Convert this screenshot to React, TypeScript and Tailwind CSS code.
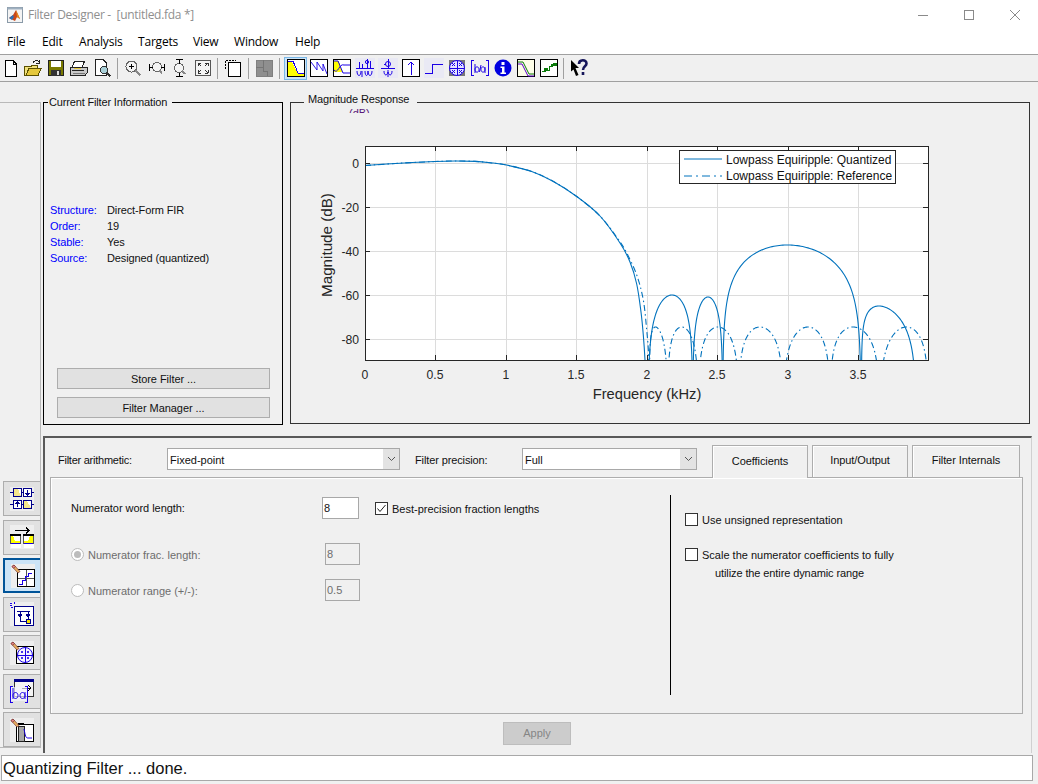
import React from "react";

const B = "#1a00e6";

type Pt = [number, number];
function lobe(a: number, b: number, px: number, py: number, k = 2.2): Pt[] {
  const g = Math.log(0.5) / Math.log((px - a) / (b - a));
  const out: Pt[] = [];
  const N = 120;
  for (let i = 1; i < N; i++) {
    const u = 0.5 - 0.5 * Math.cos((Math.PI * i) / N);
    const t = Math.pow(u, g);
    const y = py - 20 * Math.log10(Math.max(Math.sin(Math.PI * t), 1e-4)) * k;
    out.push([a + (b - a) * u, y]);
  }
  return out;
}
function smooth(p: Pt[]): string {
  let d = `M${p[0][0]} ${p[0][1]}`;
  for (let i = 0; i < p.length - 1; i++) {
    const p0 = p[i - 1] || p[i];
    const p1 = p[i];
    const p2 = p[i + 1];
    const p3 = p[i + 2] || p2;
    d += ` C${p1[0] + (p2[0] - p0[0]) / 6} ${p1[1] + (p2[1] - p0[1]) / 6} ${p2[0] - (p3[0] - p1[0]) / 6} ${p2[1] - (p3[1] - p1[1]) / 6} ${p2[0]} ${p2[1]}`;
  }
  return d;
}
function poly(p: Pt[]): string {
  return "M" + p.map((q) => `${q[0].toFixed(2)} ${q[1].toFixed(2)}`).join(" L");
}
const mainShared: Pt[] = [
  [365, 165.5], [400, 163.2], [435, 161.5], [455, 161], [475, 161.4], [490, 162.7], [506.5, 165],
  [531.7, 171.5], [553, 181.3], [576.7, 196.5], [600, 216],
];
const quantMain = smooth([...mainShared, [620, 243], [630, 262], [636.7, 284], [641, 312], [643.3, 335], [645, 360], [646.5, 400]]);
const refMain = smooth([...mainShared, [618, 239], [626.7, 253], [636.7, 275], [643.3, 300], [646.7, 330], [648.7, 357], [649.5, 400]]);
const quantLobes = [
  lobe(648, 692.7, 672, 295, 2.6),
  lobe(692.7, 722.7, 708, 297, 2.6),
  lobe(722.7, 861, 787.5, 245, 3.2),
  lobe(861.5, 916, 879, 306, 2.6),
].map(poly);
const refLobes = [
  lobe(649.5, 667.7, 655.5, 327),
  lobe(667.7, 698.3, 681.7, 327),
  lobe(698.3, 738.7, 718, 327),
  lobe(738.7, 783.2, 760, 327),
  lobe(783.2, 830.2, 808, 327),
  lobe(830.2, 879.5, 853, 327),
  lobe(879.5, 928.5, 906.5, 327),
].map(poly);

const xt: [number, string][] = [[365.5, "0"], [435.5, "0.5"], [506.5, "1"], [576.5, "1.5"], [647.5, "2"], [717.5, "2.5"], [788.5, "3"], [858.5, "3.5"]];
const yt: [number, string][] = [[163.5, "0"], [207.5, "-20"], [251.5, "-40"], [295.5, "-60"], [339.5, "-80"]];
const AX = "#262626";
const dash = "6 3 1.5 3";

function Plot() {
  return (
    <svg viewBox="291 103 738 320" width={738} height={320} className="block">
      <defs>
        <clipPath id="axclip"><rect x={365} y={146} width={564} height={215} /></clipPath>
      </defs>
      <rect x={365.5} y={146.5} width={563} height={214} fill="#fff" />
      {xt.slice(1).map(([x]) => <line key={x} x1={x} x2={x} y1={146} y2={360} stroke="#dcdcdc" />)}
      {yt.map(([y]) => <line key={y} x1={365} x2={928} y1={y} y2={y} stroke="#dcdcdc" />)}
      <g clipPath="url(#axclip)" fill="none" stroke="#0072BD" strokeWidth={1.1}>
        <path d={refMain} strokeDasharray={dash} />
        {refLobes.map((d, i) => <path key={i} d={d} strokeDasharray={dash} />)}
        <path d={quantMain} />
        {quantLobes.map((d, i) => <path key={i} d={d} />)}
      </g>
      <rect x={365.5} y={146.5} width={563} height={214} fill="none" stroke={AX} />
      {xt.slice(1).map(([x]) => (
        <g key={x} stroke={AX}>
          <line x1={x} x2={x} y1={146} y2={151} />
          <line x1={x} x2={x} y1={355} y2={360} />
        </g>
      ))}
      {yt.map(([y]) => (
        <g key={y} stroke={AX}>
          <line x1={365} x2={370} y1={y} y2={y} />
          <line x1={923} x2={928} y1={y} y2={y} />
        </g>
      ))}
      <g fill={AX} fontSize={12.2} fontFamily="'Liberation Sans',Arial,sans-serif">
        {xt.map(([x, s]) => <text key={s} x={x - 0.5} y={379} textAnchor="middle">{s}</text>)}
        {yt.map(([y, s]) => <text key={s} x={359} y={y + 4.5} textAnchor="end">{s}</text>)}
        <text x={647} y={399} textAnchor="middle" fontSize={14.7}>Frequency (kHz)</text>
        <text transform="translate(332 245) rotate(-90)" textAnchor="middle" fontSize={15.2}>Magnitude (dB)</text>
      </g>
      <rect x={679.5} y={150.5} width={216} height={33} fill="#fff" stroke={AX} />
      <line x1={684} x2={722} y1={159} y2={159} stroke="#0072BD" />
      <line x1={684} x2={722} y1={176} y2={176} stroke="#0072BD" strokeDasharray="8 4 2 4" />
      <g fill="#111" fontSize={12} fontFamily="'Liberation Sans',Arial,sans-serif">
        <text x={726} y={164}>Lowpass Equiripple: Quantized</text>
        <text x={726} y={180}>Lowpass Equiripple: Reference</text>
      </g>
    </svg>
  );
}

function Ico({ children, bg }: { children: React.ReactNode; bg?: boolean }) {
  return (
    <svg viewBox="0 0 20 20" width={20} height={20} className={bg ? "block bg-[#e9e9f4]" : "block"} shapeRendering="crispEdges">
      {children}
    </svg>
  );
}

const Box = () => <rect x={1.5} y={1.5} width={17} height={17} fill="#fff" stroke="#000" />;

const tools: Record<string, React.ReactNode> = {
  new: <Ico><path d="M4.5 2.5H12L15.5 6V18.5H4.5Z M12 2.5V6H15.5" fill="#fff" stroke="#000" /></Ico>,
  open: (
    <Ico>
      <path d="M1.5 8.5H8.5V7H14.5V10H6L3 17.5H1.5Z" fill="#f0e07a" stroke="#5a5000" />
      <path d="M3 17.5L6 10H18.5L15 17.5Z" fill="#e5c83c" stroke="#5a5000" />
      <path d="M10 5C11 2.5 14 2 16 3.5M16 1.5V5H13" fill="none" stroke="#222" />
    </Ico>
  ),
  save: (
    <Ico>
      <rect x={2.5} y={2.5} width={15} height={15} fill="#7a7a00" stroke="#222" />
      <rect x={5} y={3} width={10} height={6} fill="#fff" />
      <rect x={5} y={12} width={10} height={6} fill="#333" />
      <rect x={11} y={13} width={2} height={4} fill="#ddd" />
    </Ico>
  ),
  print: (
    <Ico>
      <path d="M5.5 3.5H15.5L13 9H3Z" fill="#fff" stroke="#222" />
      <path d="M1.5 9.5H18.5V14.5L16 17.5H1.5Z" fill="#c8c8c8" stroke="#222" />
      <path d="M3 12H15" stroke="#222" />
      <path d="M4 15H16" stroke="#777" />
      <rect x={5} y={10} width={7} height={1} fill="#e5c83c" />
    </Ico>
  ),
  preview: (
    <Ico>
      <path d="M3.5 1.5H11L14.5 5V17.5H3.5Z" fill="#fff" stroke="#222" />
      <circle cx={12} cy={12} r={3.5} fill="#a9d0d8" stroke="#333" />
      <path d="M15 15L18.5 18.5" stroke="#333" strokeWidth={2} />
    </Ico>
  ),
  zin: (
    <Ico>
      <circle cx={8.5} cy={8.5} r={5.5} fill="#f4f4f4" stroke="#666" />
      <path d="M6 8.5H11M8.5 6V11" stroke="#000" />
      <path d="M12.5 12.5L17.5 17.5" stroke="#888" strokeWidth={2} />
    </Ico>
  ),
  zx: (
    <Ico>
      <circle cx={10} cy={9} r={4.5} fill="#f4f4f4" stroke="#666" />
      <path d="M2.5 5.5V12.5M17.5 5.5V12.5M3 9H6M14 9H17" stroke="#000" />
      <path d="M12.5 12.5L15 15.5" stroke="#888" strokeWidth={2} />
    </Ico>
  ),
  zy: (
    <Ico>
      <circle cx={9} cy={10} r={4.5} fill="#f4f4f4" stroke="#666" />
      <path d="M5.5 1.5H12.5M5.5 18.5H12.5M9 2V5.5M9 15V18" stroke="#000" />
      <path d="M12 13L15.5 16" stroke="#888" strokeWidth={2} />
    </Ico>
  ),
  fit: (
    <Ico>
      <rect x={2.5} y={2.5} width={15} height={15} fill="#f4f4f4" stroke="#555" />
      <path d="M5 5H8M5 5V8M5 5L8 8M15 5H12M15 5V8M15 5L12 8M5 15H8M5 15V12M5 15L8 12M15 15H12M15 15V12M15 15L12 12" stroke="#333" fill="none" />
    </Ico>
  ),
  overlay: (
    <Ico>
      <path d="M2.5 11V2.5H13" fill="none" stroke="#000" strokeDasharray="2 1" />
      <rect x={5.5} y={4.5} width={12} height={13.5} fill="#fff" stroke="#000" />
    </Ico>
  ),
  grey: (
    <Ico>
      <rect x={2} y={2} width={16} height={16} fill="#8f8f8f" stroke="#808080" />
      <path d="M2 9H9V13H13V18M9 2V9" fill="none" stroke="#757575" />
    </Ico>
  ),
  mag: (
    <Ico><Box /><path d="M2 4H6L12 16H18V18H2Z" fill="#ffff00" /><path d="M2 3H7L12 15H18" fill="none" stroke={B} /></Ico>
  ),
  phase: (
    <Ico><Box /><path d="M2 4L8 12V4L14 13V6L18 16" fill="none" stroke={B} shapeRendering="auto" strokeWidth={0.9} /></Ico>
  ),
  magphase: (
    <Ico><Box /><path d="M2 3H7L10 14H2Z" fill="#ffff00" /><path d="M2 3H6L11 15H18M2 12C6 17 7 5 12 7H18" fill="none" stroke={B} shapeRendering="auto" /></Ico>
  ),
  gd: (
    <Ico bg>
      <path d="M1 10H19" stroke={B} />
      <path d="M4 4V10M7 6V10M12 1V10M15 3V10" stroke={B} />
      <circle cx={12} cy={4} r={1.6} fill="none" stroke={B} shapeRendering="auto" />
      <path d="M2 13C2 19 6 19 6 13M7 13V19M10 13C10 19 13 19 13 13C13 19 17 19 17 13" fill="none" stroke={B} shapeRendering="auto" />
    </Ico>
  ),
  pd: (
    <Ico bg>
      <path d="M3 10H17" stroke={B} />
      <circle cx={10} cy={6} r={2.5} fill="none" stroke={B} shapeRendering="auto" />
      <path d="M10 1V10M6 6H8" stroke={B} />
      <path d="M6 13C6 18 9 18 10 14C11 18 14 18 14 13M10 12V19" fill="none" stroke={B} shapeRendering="auto" />
    </Ico>
  ),
  imp: (
    <Ico><Box /><path d="M10 17V4M6.5 7.5L10 4L13.5 7.5" fill="none" stroke={B} /></Ico>
  ),
  step: (
    <Ico bg><path d="M1 15.5H8.5V6.5H19" fill="none" stroke={B} /></Ico>
  ),
  pz: (
    <Ico>
      <rect x={2} y={2} width={16} height={16} fill="#777" />
      <circle cx={10} cy={10} r={7.5} fill="#e4e4ff" stroke={B} shapeRendering="auto" />
      <path d="M3 10H17M10 3V17" stroke={B} />
      <path d="M5 5L8 8M8 5L5 8M12 5L15 8M15 5L12 8M5 12L8 15M8 12L5 15M12 12L15 15M15 12L12 15" stroke={B} shapeRendering="auto" />
    </Ico>
  ),
  ba: (
    <Ico>
      <path d="M4 2.5H1.5V17.5H4M16 2.5H18.5V17.5H16" fill="none" stroke={B} />
      <path d="M5 6V15M5 11.5C5 8 9 8 9 11.5C9 15 5 15 5 11.5M15 9V15M15 11.5C15 8 11 8 11 11.5C11 15 15 15 15 11.5" fill="none" stroke={B} shapeRendering="auto" />
      <path d="M9.5 14L11 7" stroke={B} shapeRendering="auto" />
    </Ico>
  ),
  info: (
    <svg viewBox="0 0 20 20" width={20} height={20} className="block">
      <circle cx={10} cy={10} r={8.5} fill="#0000e0" />
      <rect x={8.5} y={4} width={3} height={3} fill="#fff" />
      <path d="M7.5 8.5H11.5V14.5H13V16H7.5V14.5H9V10H7.5Z" fill="#fff" />
    </svg>
  ),
  noise: (
    <Ico>
      <rect x={1.5} y={1.5} width={17} height={17} fill="#fdfde8" stroke="#000" />
      <path d="M2 4H7L13 16H18" fill="none" stroke="#0a7a0a" shapeRendering="auto" />
      <path d="M2 6H6L12 18H18" fill="none" stroke="#5a00c8" shapeRendering="auto" />
    </Ico>
  ),
  round: (
    <Ico><Box /><path d="M3 13.5H6V11H8V12.5H10.5V8.5H13V7H15V6H17V8" fill="none" stroke="#0a7a0a" strokeWidth={1.4} /></Ico>
  ),
  help: (
    <svg viewBox="0 0 20 20" width={20} height={20} className="block">
      <path d="M2 2L10 10H6.5L9.5 17L7 18L4.5 11.5L2 13.5Z" fill="#000" />
      <path d="M10 6C10 1 17.5 1 17.5 5.5C17.5 8.5 14 8 14 12" fill="none" stroke="#16165a" strokeWidth={2.6} />
      <rect x={12.7} y={14} width={2.6} height={3} fill="#16165a" />
    </svg>
  ),
};

function T({ k, w = 23, ml = 0, sel }: { k: string; w?: number; ml?: number; sel?: boolean }) {
  return (
    <div
      className={"flex h-[23px] items-center justify-center " + (sel ? "border border-[#7ab8e8] bg-[#cce4f7] " : "")}
      style={{ width: w, marginLeft: ml }}
    >
      {tools[k]}
    </div>
  );
}
function Sep({ w }: { w: number }) {
  return (
    <div className="flex h-[23px] items-center justify-center" style={{ width: w }}>
      <div className="h-[21px] w-px bg-[#a0a0a0]" />
    </div>
  );
}

const Pencil = () => (
  <g shapeRendering="auto">
    <path d="M1 2.5L3 1L9 7.5L7 9Z" fill="#e8b060" stroke="#733" strokeWidth={0.7} />
    <path d="M1 2.5L3 1L4.5 2.6L2.5 4.2Z" fill="#e88a8a" stroke="#733" strokeWidth={0.7} />
  </g>
);
const sideIcons: React.ReactNode[] = [
  <svg viewBox="0 0 24 24" width={24} height={24} className="block bg-[#eeeeee]" shapeRendering="crispEdges" key="1">
    <rect x={3.5} y={1.5} width={8} height={8} fill="#fff" stroke="#00008b" />
    <path d="M4 2H8L11 9H4Z" fill="#f5e68c" />
    <rect x={13.5} y={1.5} width={8} height={8} fill="#fff" stroke="#00008b" />
    <path d="M17.5 3V8M15.5 6L17.5 8L19.5 6" stroke="#00008b" fill="none" />
    <rect x={3.5} y={13.5} width={8} height={8} fill="#fff" stroke="#00008b" />
    <path d="M7.5 20V15M5.5 17L7.5 15L9.5 17" stroke="#00008b" fill="none" />
    <rect x={13.5} y={13.5} width={8} height={8} fill="#fff" stroke="#00008b" />
    <path d="M14 14H17L21 21H14Z" fill="#f5e68c" />
    <path d="M0 5.5H3M0 17.5H3M21 5.5H24M21 17.5H24M11 5.5H14M11 17.5H14" stroke="#00008b" />
  </svg>,
  <svg viewBox="0 0 24 24" width={24} height={24} className="block bg-[#eeeeee]" shapeRendering="crispEdges" key="2">
    <path d="M5 5.5H19M16 2.5L19 5.5L16 8.5" stroke="#000" fill="none" />
    <rect x={0.5} y={9.5} width={10} height={13} fill="#fff" />
    <rect x={0} y={9} width={11} height={2} fill="#000" />
    <path d="M0.5 11V18.5M10.5 11V18.5" stroke="#555" />
    <path d="M1 11H3L5 16H10V18H1Z" fill="#ffff00" />
    <path d="M1 18.5H10" stroke={B} />
    <rect x={13.5} y={9.5} width={10} height={13} fill="#fff" />
    <rect x={13} y={9} width={11} height={2} fill="#000" />
    <path d="M13.5 11V18.5M23.5 11V18.5" stroke="#555" />
    <path d="M14 16H18L20 11H23V18H14Z" fill="#ffff00" />
    <path d="M14 18.5H23" stroke={B} />
  </svg>,
  <svg viewBox="0 0 24 24" width={24} height={24} className="block bg-[#eeeeee]" shapeRendering="crispEdges" key="3">
    <rect x={6.5} y={5.5} width={17} height={17} fill="#fff" stroke="#000" />
    <path d="M7 14H23M15 6V22" stroke="#555" />
    <path d="M8 20H11V16H14V12H17V9H21" fill="none" stroke={B} />
    <Pencil />
  </svg>,
  <svg viewBox="0 0 24 24" width={24} height={24} className="block bg-[#eeeeee]" shapeRendering="crispEdges" key="4">
    <rect x={4.5} y={4.5} width={19} height={19} fill="#fff" stroke="#00008b" strokeWidth={1.2} />
    <path d="M7 9H20M10 9V12M18 9V12M10 15V19H17M18 15V17" stroke="#00008b" fill="none" />
    <path d="M8 12H12L10 15ZM16 12H20L18 15Z" fill="#f5e000" stroke="#00008b" />
    <rect x={16} y={17} width={4} height={4} fill="#f5e000" stroke="#00008b" />
    <path d="M0 1H2M4 0V2M0 3H2M1 5H3" stroke={B} />
  </svg>,
  <svg viewBox="0 0 24 24" width={24} height={24} className="block bg-[#eeeeee]" shapeRendering="crispEdges" key="5">
    <rect x={6.5} y={5.5} width={17} height={17} fill="#fff" stroke="#000" />
    <circle cx={15} cy={14} r={7.5} fill="#f4f4ff" stroke={B} shapeRendering="auto" />
    <path d="M7 14H23M15 6V22" stroke={B} />
    <path d="M11 10L13 12M13 10L11 12M17 10L19 12M19 10L17 12M11 16L13 18M13 16L11 18M17 16L19 18M19 16L17 18" stroke={B} strokeWidth={0.8} shapeRendering="auto" />
    <Pencil />
  </svg>,
  <svg viewBox="0 0 24 24" width={24} height={24} className="block" shapeRendering="crispEdges" key="6">
    <rect x={4.5} y={0.5} width={19} height={17} fill="#f4f4f4" stroke="#333" />
    <rect x={4} y={0} width={20} height={3} fill="#00008b" />
    <path d="M12 9H21M18 6L21 9L18 12" stroke="#000" fill="none" />
    <rect x={1} y={8} width={16} height={14} fill="#f4f4ff" fillOpacity={0.7} />
    <path d="M3 7H0.5V23H3M15 7H17.5V23H15" fill="none" stroke={B} />
    <path d="M3 9V20M3 16.5C3 12.5 8 12.5 8 16.5C8 20.5 3 20.5 3 16.5M15 13V20M15 16.5C15 12.5 10 12.5 10 16.5C10 20.5 15 20.5 15 16.5" fill="none" stroke={B} shapeRendering="auto" />
  </svg>,
  <svg viewBox="0 0 24 24" width={24} height={24} className="block bg-[#eeeeee]" shapeRendering="crispEdges" key="7">
    <rect x={6.5} y={6.5} width={17} height={17} fill="#fff" stroke="#000" />
    <rect x={8} y={8} width={6} height={15} fill="#a8a8a8" stroke="#222" />
    <path d="M8 5.5H14" stroke="#000" />
    <path d="M14 11C15.5 18 15.5 20 18 20H22" fill="none" stroke={B} shapeRendering="auto" />
    <Pencil />
  </svg>,
];

function Legend({ children, className }: { children: React.ReactNode; className: string }) {
  return <span className={"absolute whitespace-nowrap bg-[#f0f0f0] text-[11px] leading-[14px] text-[#111] " + className}>{children}</span>;
}

function PanelBtn({ label }: { label: string }) {
  return (
    <div className="flex h-[21px] items-center justify-center border border-[#adadad] bg-[#e1e1e1] pt-[2px] text-[11px] tracking-[-0.05px] text-[#111]">
      {label}
    </div>
  );
}

function Combo({ value, className }: { value: string; className: string }) {
  return (
    <div className={"mt-[3px] flex h-[22px] items-stretch border border-[#a8a8a8] bg-white " + className}>
      <span className="flex flex-1 items-center pl-[2px] pt-[2px] text-[11px] text-[#111]">{value}</span>
      <span className="flex w-[16px] items-center justify-center bg-[#e3e3e3]">
        <svg width={9} height={6} viewBox="0 0 9 6"><path d="M1 1L4.5 4.5L8 1" fill="none" stroke="#555" /></svg>
      </span>
    </div>
  );
}

function Tab({ label, w, active, ml }: { label: string; w: string; active?: boolean; ml: string }) {
  return (
    <div
      className={
        "relative z-10 flex items-center justify-center border border-b-0 border-[#adadad] bg-[#f0f0f0] pb-[2px] text-[11px] tracking-[-0.08px] text-[#111] shadow-[inset_1px_1px_0_#fff] " +
        w + " " + ml + " " + (active ? "h-[33px]" : "h-[32px]")
      }
    >
      {label}
    </div>
  );
}

function Check({ on }: { on?: boolean }) {
  return (
    <span className="flex h-[13px] w-[13px] shrink-0 items-center justify-center border border-[#333] bg-white">
      {on && <svg width={11} height={11} viewBox="0 0 11 11"><path d="M1.5 5.5L4 8.5L9.5 2" fill="none" stroke="#222" /></svg>}
    </span>
  );
}
function Radio({ on }: { on?: boolean }) {
  return (
    <span className="flex h-[13px] w-[13px] shrink-0 items-center justify-center rounded-full border border-[#bcbcbc] bg-white">
      {on && <span className="h-[7px] w-[7px] rounded-full bg-[#bcbcbc]" />}
    </span>
  );
}

export default function App() {
  return (
    <div className="flex h-[784px] w-[1038px] flex-col overflow-hidden bg-[#f0f0f0] [font-family:'Liberation_Sans',Arial,sans-serif]">
      {/* title */}
      <div className="flex h-[30px] items-center bg-white pl-[7px] [font-family:'Open_Sans',sans-serif]">
        <svg viewBox="0 0 16 16" width={16} height={16} className="block">
          <rect x={0.5} y={0.5} width={15} height={15} fill="#f4f4f4" stroke="#8a9aa8" />
          <rect x={0.5} y={0.5} width={15} height={2} fill="#9fb0c0" />
          <path d="M2 11L6 8L9 3L13 12L10 10L8 14Z" fill="#c9471a" />
          <path d="M2 11L6 8L7 10L5 13Z" fill="#2f6fb5" />
          <path d="M9 3L13 12L10 10Z" fill="#e88a1a" />
        </svg>
        <span className="ml-[5px] whitespace-pre text-[12px] tracking-[-0.3px] text-[#8f8f8f]">Filter Designer -  [untitled.fda *]</span>
        <div className="ml-auto flex">
          <div className="flex h-[30px] w-[46px] items-center justify-center">
            <svg width={10} height={10} viewBox="0 0 10 10"><path d="M0 5.5H10" stroke="#8a8a8a" /></svg>
          </div>
          <div className="flex h-[30px] w-[46px] items-center justify-center">
            <svg width={10} height={10} viewBox="0 0 10 10"><rect x={0.5} y={0.5} width={9} height={9} fill="none" stroke="#8a8a8a" /></svg>
          </div>
          <div className="flex h-[30px] w-[46px] items-center justify-center">
            <svg width={10} height={10} viewBox="0 0 10 10"><path d="M0 0L10 10M10 0L0 10" stroke="#8a8a8a" /></svg>
          </div>
        </div>
      </div>
      {/* menu */}
      <div className="flex h-[24px] items-center bg-white pl-[7px] text-[12px] tracking-[-0.2px] text-black [font-family:'Open_Sans',sans-serif]">
        <span className="w-[35px]">File</span>
        <span className="w-[37px]">Edit</span>
        <span className="w-[59px]">Analysis</span>
        <span className="w-[55px]">Targets</span>
        <span className="w-[41px]">View</span>
        <span className="w-[61px]">Window</span>
        <span>Help</span>
      </div>
      {/* toolbar */}
      <div className="flex h-[28px] items-center border-y border-[#a0a0a0] bg-[#f0f0f0]">
        <T k="new" w={21} />
        <T k="open" />
        <T k="save" />
        <T k="print" />
        <T k="preview" />
        <Sep w={8} />
        <T k="zin" />
        <T k="zx" ml={1} />
        <T k="zy" />
        <T k="fit" />
        <Sep w={7} />
        <T k="overlay" />
        <Sep w={8} />
        <T k="grey" />
        <Sep w={9} />
        <T k="mag" sel />
        <T k="phase" />
        <T k="magphase" />
        <T k="gd" />
        <T k="pd" />
        <T k="imp" />
        <T k="step" />
        <T k="pz" />
        <T k="ba" />
        <T k="info" />
        <T k="noise" />
        <T k="round" />
        <Sep w={7} />
        <T k="help" />
      </div>
      {/* body */}
      <div className="flex h-[671px]">
        <div className="mt-[20px] flex h-[646px] w-[41px] flex-col justify-end gap-[3.5px] border-t border-r border-b border-[#b9b9b9] pl-[3px]">
          {sideIcons.map((ic, i) => (
            <div
              key={i}
              className={
                "flex h-[35px] items-center justify-center " +
                (i === 2 ? "border-2 border-r-0 border-[#005499] bg-[#cce4f7]" : "border border-r-0 border-[#adadad] bg-[#e1e1e1]")
              }
            >
              {ic}
            </div>
          ))}
        </div>
        <div className="ml-[2px] flex w-[989px] flex-col pt-[20px]">
          <div className="flex h-[322px] items-start gap-[7px]">
            <div className="relative flex h-[323px] w-[240px] flex-col border border-black bg-[#f0f0f0] pb-[6px] pl-[13px] pr-[12px] pt-[99px]">
              <Legend className="left-[4px] top-[-8px] pl-px pr-[5px] tracking-[-0.16px]">Current Filter Information</Legend>
              <div className="ml-[-7px] flex flex-col text-[11px] leading-[16px] text-[#111]">
                {[
                  ["Structure:", "Direct-Form FIR"],
                  ["Order:", "19"],
                  ["Stable:", "Yes"],
                  ["Source:", "Designed (quantized)"],
                ].map(([a, b]) => (
                  <div key={a} className="flex">
                    <span className="w-[57px] tracking-[-0.1px] text-[#0000ff]">{a}</span>
                    <span className="tracking-[-0.12px]">{b}</span>
                  </div>
                ))}
              </div>
              <div className="mt-auto flex flex-col gap-[8px]">
                <PanelBtn label="Store Filter ..." />
                <PanelBtn label="Filter Manager ..." />
              </div>
            </div>
            <div className="relative h-[322px] w-[740px] border border-[#333] bg-[#f0f0f0]">
              <Legend className="left-[13px] top-[-11px] pl-[4px] pr-[8px] tracking-[-0.15px]">Magnitude Response</Legend>
              <span className="absolute left-[58px] top-[3px] h-[7px] overflow-hidden text-[11px] leading-[14px] text-[#5a1a7a]">(dB)</span>
              <Plot />
            </div>
          </div>
          <div className="mt-[12px] flex h-[317px] flex-col border-t-2 border-l-2 border-r border-[#595959] border-r-[#d0d0d0] pt-[7px]">
            <div className="flex h-[32px] items-start">
              <span className="mt-[7px] w-[122px] shrink-0 pl-[13px] text-[11px] tracking-[-0.25px] text-[#111]">Filter arithmetic:</span>
              <Combo value="Fixed-point" className="w-[233px]" />
              <span className="mt-[7px] ml-[15px] w-[107px] text-[11px] tracking-[-0.12px] text-[#111]">Filter precision:</span>
              <Combo value="Full" className="w-[175px]" />
              <Tab label="Coefficients" w="w-[96px]" ml="ml-[15px]" active />
              <Tab label="Input/Output" w="w-[96px]" ml="ml-[4px]" />
              <Tab label="Filter Internals" w="w-[108px]" ml="ml-[4px]" />
            </div>
            <div className="ml-[5px] flex h-[237px] w-[973px] border border-[#adadad] text-[11px] text-[#111] shadow-[inset_1px_1px_0_#fff]">
              <div className="flex w-[619px] flex-col pl-[20px] pt-[19px]">
                <div className="flex h-[22px] items-center">
                  <span className="w-[251px] tracking-[-0.05px]">Numerator word length:</span>
                  <span className="flex h-[22px] w-[37px] items-center border border-[#a8a8a8] bg-white pl-px">8</span>
                  <span className="ml-[16px] mr-[4px]"><Check on /></span>
                  <span className="pt-[2px]">Best-precision fraction lengths</span>
                </div>
                <div className="mt-[24px] flex h-[22px] items-center text-[#6d6d6d]">
                  <Radio on />
                  <span className="ml-[4px] w-[237px] pt-[2px]">Numerator frac. length:</span>
                  <span className="flex h-[22px] w-[35px] items-center border border-[#a8a8a8] pl-px">8</span>
                </div>
                <div className="mt-[14px] flex h-[22px] items-center text-[#6d6d6d]">
                  <Radio />
                  <span className="ml-[4px] w-[237px] pt-[2px]">Numerator range (+/-):</span>
                  <span className="flex h-[22px] w-[35px] items-center border border-[#a8a8a8] pl-px">0.5</span>
                </div>
              </div>
              <div className="mt-[17px] h-[200px] w-px bg-black" />
              <div className="flex flex-col pl-[14px] pt-[35px]">
                <div className="flex h-[13px] items-center gap-[4px]"><Check /><span className="pt-[2px]">Use unsigned representation</span></div>
                <div className="mt-[22px] flex h-[13px] items-center gap-[4px]"><Check /><span className="pt-[2px]">Scale the numerator coefficients to fully</span></div>
                <span className="ml-[30px] mt-[5px] leading-[14px] tracking-[-0.1px]">utilize the entire dynamic range</span>
              </div>
            </div>
            <div className="ml-[458px] mt-[8px] flex h-[23px] w-[68px] items-center justify-center border border-[#bdbdbd] bg-[#cccccc] text-[11px] text-[#858585]">
              Apply
            </div>
          </div>
        </div>
      </div>
      {/* status */}
      <div className="ml-px mt-[2px] flex h-[26px] w-[1032px] items-center border border-[#a8a8a8] bg-white pl-px pt-[1px] text-[16.5px] text-[#111]">
        Quantizing Filter ... done.
      </div>
    </div>
  );
}
